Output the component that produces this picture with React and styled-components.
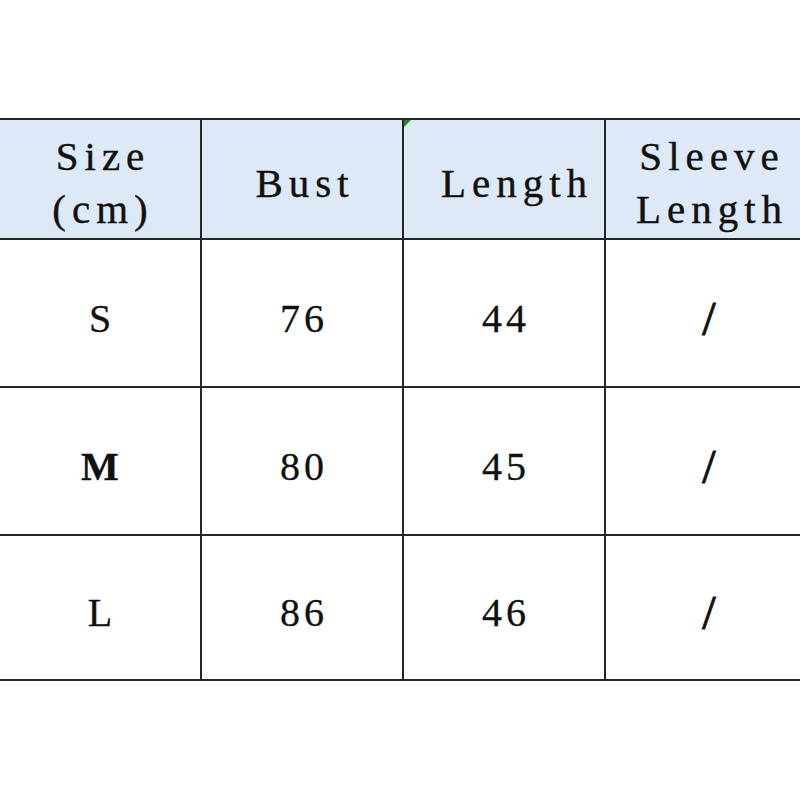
import React from 'react'
import styled, {createGlobalStyle} from 'styled-components'

const GlobalStyle = createGlobalStyle`
  html, body {
    margin: 0;
    padding: 0;
    background: #fff;
    overflow: hidden;
  }
`;

const Page = styled.div`
  width: 800px;
  height: 800px;
  padding-top: 118px;
  box-sizing: border-box;
  overflow: hidden;
  background: #fff;
`;

const Grid = styled.div`
  display: grid;
  grid-template-columns: 200px 200px 200px 206px;
  grid-template-rows: 118px 146px 146px 143px;
  gap: 2px;
  padding: 2px 0;
  width: 812px;
  background: #262626;
  color: #111;
`;

const HeadCell = styled.div`
  position: relative;
  background: #dde9f6;
  display: flex;
  flex-direction: column;
  align-items: center;
  justify-content: center;
  padding-top: 8px;
  padding-left: ${p => p.$shift || 0}px;
  font-family: "Liberation Serif", "Times New Roman", serif;
  font-size: 41px;
  line-height: 53px;
  letter-spacing: 6px;
  text-indent: 6px;
  -webkit-text-stroke: 0.4px #111;

  ${p => p.$marker && `
    &::before {
      content: "";
      position: absolute;
      top: 0;
      left: 0;
      border-top: 7px solid #1f8a2a;
      border-right: 7px solid transparent;
    }
  `}
`;

const Cell = styled.div`
  background: #fff;
  display: flex;
  align-items: center;
  justify-content: center;
  padding-top: 10px;
  font-family: "Liberation Serif", "Times New Roman", serif;
  font-size: ${p => (p.$slash ? 48 : 40)}px;
  font-weight: ${p => (p.$strong ? 700 : 400)};
  letter-spacing: 4px;
  text-indent: 4px;
  -webkit-text-stroke: ${p => (p.$slash ? 1 : 0.3)}px #111;
`;

const rows = [
  ['S', '76', '44', '/'],
  ['M', '80', '45', '/'],
  ['L', '86', '46', '/']
]

export default function App() {
  return (
    <Page>
      <GlobalStyle/>
      <Grid>
        <HeadCell>
          <span>Size</span>
          <span>(cm)</span>
        </HeadCell>
        <HeadCell>
          <span>Bust</span>
        </HeadCell>
        <HeadCell $marker $shift={20}>
          <span>Length</span>
        </HeadCell>
        <HeadCell>
          <span>Sleeve</span>
          <span>Length</span>
        </HeadCell>
        {rows.map(r => r.map((v, i) => (
          <Cell key={r[0] + i} $strong={v === 'M'} $slash={v === '/'}>{v}</Cell>
        )))}
      </Grid>
    </Page>
  )
}
